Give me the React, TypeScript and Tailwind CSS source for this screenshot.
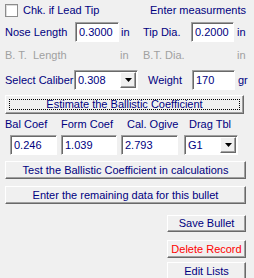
import React from 'react';

const navy = 'text-[#000080]';

const Field: React.FC<{ value: string; w: string }> = ({ value, w }) => (
  <div
    className={`${w} h-[20px] bg-white border border-t-[#a0a0a0] border-l-[#a0a0a0] border-b-white border-r-white shadow-[inset_1px_1px_#696969] px-[3px] flex items-center ${navy}`}
  >
    {value}
  </div>
);

const Combo: React.FC<{ value: string; w: string }> = ({ value, w }) => (
  <div
    className={`${w} h-[20px] bg-white border border-t-[#a0a0a0] border-l-[#a0a0a0] border-b-white border-r-white shadow-[inset_1px_1px_#696969] flex items-center pl-[3px] pr-[1px] ${navy}`}
  >
    <span className="flex-1">{value}</span>
    <div className="w-[16px] h-[16px] bg-[#f0f0f0] border border-t-white border-l-white border-b-[#696969] border-r-[#696969] shadow-[inset_-1px_-1px_#a0a0a0] flex items-center justify-center">
      <svg width="7" height="4" viewBox="0 0 7 4">
        <path d="M0 0h7L3.5 4z" fill="#000" />
      </svg>
    </div>
  </div>
);

const Btn: React.FC<{ label: string; w: string; h: string; red?: boolean; focus?: boolean }> = ({ label, w, h, red, focus }) => (
  <div
    className={`${w} ${h} bg-[#f0f0f0] border border-t-white border-l-white border-b-[#696969] border-r-[#696969] shadow-[inset_-1px_-1px_#a0a0a0] flex items-center justify-center ${red ? 'text-[#ff0000]' : navy}`}
  >
    {focus ? (
      <div className="w-[calc(100%-6px)] h-[calc(100%-6px)] border border-dotted border-black flex items-center justify-center">
        {label}
      </div>
    ) : (
      label
    )}
  </div>
);

export default function App() {
  return (
    <div className="w-[254px] h-[278px] bg-[#f0f0f0] text-[11px] leading-none overflow-hidden" style={{ fontFamily: '"Liberation Sans", Arial, sans-serif' }}>
      <div className="flex items-center h-[20px] pt-[1px]">
        <div className="ml-[5px] w-[13px] h-[13px] bg-white border border-[#8c8c8c] shadow-[inset_1px_1px_#dcdcdc]" />
        <span className={`ml-[5px] ${navy}`}>Chk. if Lead Tip</span>
        <span className={`ml-auto mr-[8px] ${navy}`}>Enter measurments</span>
      </div>

      <div className="flex items-center h-[20px] mt-[2px]">
        <span className={`ml-[5px] w-[70px] ${navy}`}>Nose Length</span>
        <Field value="0.3000" w="w-[44px]" />
        <span className={`ml-[2px] w-[22px] ${navy}`}>in</span>
        <span className={`w-[48px] ${navy}`}>Tip Dia.</span>
        <Field value="0.2000" w="w-[43px]" />
        <span className={`ml-[3px] ${navy}`}>in</span>
      </div>

      <div className="flex items-center h-[20px] mt-[3px] text-[#a0a0a0]">
        <span className="ml-[5px] w-[115px]">B. T.&nbsp; Length</span>
        <span className="w-[23px]">in</span>
        <span className="w-[94px]">B.T. Dia.</span>
        <span>in</span>
      </div>

      <div className="flex items-center h-[20px] mt-[5px]">
        <span className={`ml-[5px] w-[69px] ${navy}`}>Select Caliber</span>
        <Combo value="0.308" w="w-[64px]" />
        <span className={`ml-[10px] w-[44px] ${navy}`}>Weight</span>
        <Field value="170" w="w-[43px]" />
        <span className={`ml-[3px] ${navy}`}>gr</span>
      </div>

      <div className="ml-[5px] mt-[5px]">
        <Btn label="Estimate the Ballistic Coefficient" w="w-[239px]" h="h-[19px]" focus />
      </div>

      <div className={`flex items-center h-[12px] mt-[4px] ${navy}`}>
        <span className="ml-[5px] w-[56px]">Bal Coef</span>
        <span className="w-[66px]">Form Coef</span>
        <span className="w-[62px]">Cal. Ogive</span>
        <span>Drag Tbl</span>
      </div>

      <div className="flex items-center mt-[5px]">
        <div className="ml-[10px]">
          <Field value="0.246" w="w-[47px]" />
        </div>
        <div className="ml-[4px]">
          <Field value="1.039" w="w-[56px]" />
        </div>
        <div className="ml-[4px]">
          <Field value="2.793" w="w-[57px]" />
        </div>
        <div className="ml-[6px]">
          <Combo value="G1" w="w-[54px]" />
        </div>
      </div>

      <div className="ml-[5px] mt-[6px]">
        <Btn label="Test the Ballistic Coefficient in calculations" w="w-[241px]" h="h-[18px]" />
      </div>
      <div className="ml-[5px] mt-[7px]">
        <Btn label="Enter the remaining data for this bullet" w="w-[241px]" h="h-[18px]" />
      </div>

      <div className="flex flex-col items-end pr-[8px] mt-[11px] gap-[8px]">
        <Btn label="Save Bullet" w="w-[79px]" h="h-[17px]" />
        <Btn label="Delete Record" w="w-[79px]" h="h-[18px]" red />
      </div>
      <div className="flex justify-end pr-[8px] mt-[4px]">
        <Btn label="Edit Lists" w="w-[79px]" h="h-[18px]" />
      </div>
    </div>
  );
}
